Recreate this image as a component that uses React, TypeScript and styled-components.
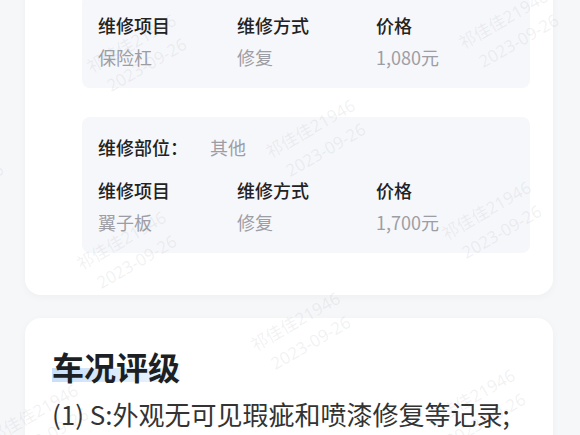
import styled, { createGlobalStyle } from "styled-components";

const GlobalStyle = createGlobalStyle`
  html, body {
    margin: 0;
    padding: 0;
    background: #f6f7f9;
  }
  body {
    font-family: "Noto Sans CJK SC", "Noto Sans", sans-serif;
    overflow: hidden;
  }
`;

type RepairItem = { name: string; method: string; price: string };
type RepairGroup = { part?: string; items: RepairItem[] };

const groups: RepairGroup[] = [
  { items: [{ name: "保险杠", method: "修复", price: "1,080元" }] },
  { part: "其他", items: [{ name: "翼子板", method: "修复", price: "1,700元" }] },
];

const marks = [
  { x: 138, y: 55 },
  { x: 510, y: 31 },
  { x: 317, y: 140 },
  { x: -45, y: 180 },
  { x: 128, y: 252 },
  { x: 493, y: 222 },
  { x: 302, y: 333 },
  { x: 477, y: 410 },
  { x: 40, y: 425 },
];

const App = () => {
  return (
    <Page>
      <GlobalStyle />
      <RepairCard>
        {groups.map((group, i) => (
          <RepairBox key={i}>
            {group.part && (
              <PartRow>
                <Label>维修部位：</Label>
                <Value>{group.part}</Value>
              </PartRow>
            )}
            <Grid>
              <Label>维修项目</Label>
              <Label>维修方式</Label>
              <Label>价格</Label>
              {group.items.map((item) => (
                <>
                  <Value>{item.name}</Value>
                  <Value>{item.method}</Value>
                  <Value>{item.price}</Value>
                </>
              ))}
            </Grid>
          </RepairBox>
        ))}
      </RepairCard>

      <RatingCard>
        <Title>车况评级</Title>
        <Text>(1) S:外观无可见瑕疵和喷漆修复等记录;</Text>
      </RatingCard>

      {marks.map((m, i) => (
        <Watermark key={i} $x={m.x} $y={m.y}>
          <span>祁佳佳21946</span>
          <span>2023-09-26</span>
        </Watermark>
      ))}
    </Page>
  );
};

export default App;

const Page = styled.div`
  position: relative;
  width: 580px;
  height: 435px;
  overflow: hidden;
`;
const RepairCard = styled.section`
  display: flex;
  flex-direction: column;
  gap: 29px;
  margin: -40px 27px 0 25px;
  padding: 35px 23px 42px 57px;
  background: #fff;
  border-radius: 0 0 16px 16px;
  box-shadow: 0 2px 8px rgba(0, 0, 0, 0.035);
`;
const RepairBox = styled.div`
  display: flex;
  flex-direction: column;
  gap: 11px;
  padding: 14px 16px 15px;
  background: #f6f7fa;
  border-radius: 8px;
`;
const PartRow = styled.div`
  display: flex;
  gap: 22px;
`;
const Grid = styled.div`
  display: grid;
  grid-template-columns: 139px 139px 1fr;
`;
const Label = styled.span`
  font-size: 18px;
  line-height: 32px;
  font-weight: 500;
  color: #222;
`;
const Value = styled.span`
  font-size: 18px;
  line-height: 32px;
  color: #9d9ea5;
`;
const RatingCard = styled.section`
  display: flex;
  flex-direction: column;
  align-items: flex-start;
  gap: 10px;
  margin: 23px 27px 0 25px;
  padding: 30px 27px 20px;
  background: #fff;
  border-radius: 16px;
  box-shadow: 0 2px 8px rgba(0, 0, 0, 0.035);
`;
const Title = styled.h2`
  position: relative;
  isolation: isolate;
  margin: 0;
  font-size: 32px;
  line-height: 36px;
  font-weight: 700;
  color: #1c1f24;

  &::after {
    content: "";
    position: absolute;
    left: 0;
    right: 0;
    bottom: 2px;
    height: 14px;
    z-index: -1;
    background: linear-gradient(90deg, rgba(110, 170, 240, 0.38), rgba(150, 195, 245, 0.15));
  }
`;
const Text = styled.p`
  margin: 0;
  font-size: 26px;
  line-height: 40px;
  color: #333;
  white-space: nowrap;
`;
const Watermark = styled.div<{ $x: number; $y: number }>`
  position: absolute;
  left: ${(p) => p.$x}px;
  top: ${(p) => p.$y}px;
  display: flex;
  flex-direction: column;
  align-items: flex-start;
  transform: translate(-50%, -50%) rotate(-30deg);
  font-family: "Noto Sans", "Noto Sans CJK SC", sans-serif;
  font-size: 17px;
  line-height: 26px;
  color: rgba(140, 145, 155, 0.12);
  white-space: nowrap;
  pointer-events: none;

  span:last-child {
    padding-left: 8px;
  }
`;
